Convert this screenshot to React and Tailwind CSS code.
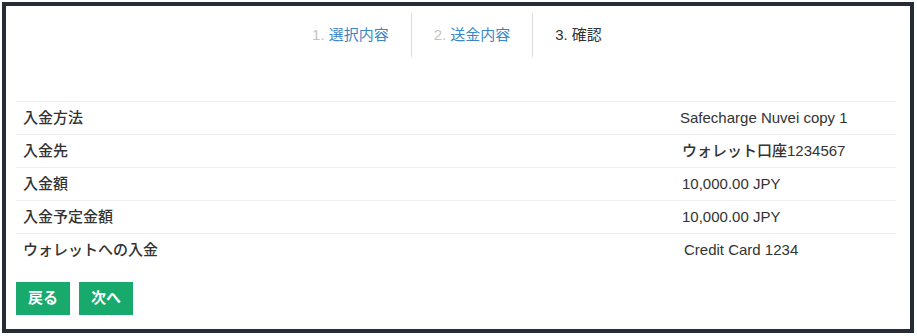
import React from 'react';

const steps = [
  { num: '1.', label: '選択内容', active: false },
  { num: '2.', label: '送金内容', active: false },
  { num: '3.', label: '確認', active: true },
];

const rows = [
  { label: '入金方法', value: 'Safecharge Nuvei copy 1', pad: 'pl-[7px]' },
  {
    label: '入金先',
    value: (
      <>
        <span className="font-medium">ウォレット口座</span>1234567
      </>
    ),
    pad: 'pl-[9px]',
  },
  { label: '入金額', value: '10,000.00 JPY', pad: 'pl-[9px]' },
  { label: '入金予定金額', value: '10,000.00 JPY', pad: 'pl-[9px]' },
  { label: 'ウォレットへの入金', value: 'Credit Card 1234', pad: 'pl-[11px]' },
];

export default function App() {
  return (
    <div
      className="w-[917px] h-[336px] bg-white p-[2px]"
      style={{ fontFamily: '"Liberation Sans", "Noto Sans CJK JP", sans-serif' }}
    >
      <div className="w-[912px] h-[331px] border-[4px] border-[#262c34] bg-white flex flex-col">
        {/* Steps */}
        <div className="flex justify-center mt-[7px] -translate-x-[1px]">
          {steps.map((s, i) => (
            <div
              key={s.num}
              className={`h-[44px] flex items-center px-[22px] text-[15px] ${i > 0 ? 'border-l border-[#dcdcdc]' : ''}`}
            >
              {s.active ? (
                <span className="text-[#333]">
                  {s.num} {s.label}
                </span>
              ) : (
                <>
                  <span className="text-[#c4c4c4]">{s.num}</span>
                  <span className="text-[#3b86c4] ml-[4px]">{s.label}</span>
                </>
              )}
            </div>
          ))}
        </div>

        {/* Confirm table */}
        <div className="mt-[44px] ml-[10px] w-[880px]">
          {rows.map((r) => (
            <div
              key={r.label}
              className="grid grid-cols-[657px_1fr] h-[33px] items-center border-t border-[#f0f0f0] text-[15px] text-[#333]"
            >
              <div className="pl-[7px] font-medium">{r.label}</div>
              <div className={r.pad}>{r.value}</div>
            </div>
          ))}
        </div>

        {/* Buttons */}
        <div className="flex gap-[9px] ml-[10px] mt-[16px]">
          <button className="h-[33px] px-[12px] bg-[#18a96c] text-white text-[15px] font-bold">戻る</button>
          <button className="h-[33px] px-[12px] bg-[#18a96c] text-white text-[15px] font-bold">次へ</button>
        </div>
      </div>
    </div>
  );
}
